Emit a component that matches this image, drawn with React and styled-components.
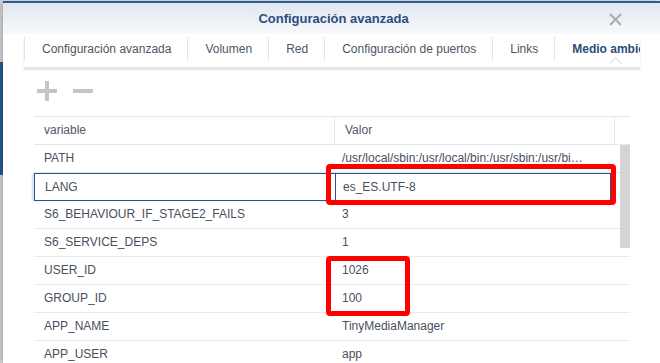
import React from "react";
import styled, { createGlobalStyle } from "styled-components";

const GlobalStyle = createGlobalStyle`
  html, body {
    margin: 0;
    padding: 0;
    background: #e9e9ec;
    font-family: "Liberation Sans", Arial, sans-serif;
    overflow: hidden;
  }
`;

const tabs = [
  { label: "Configuración avanzada" },
  { label: "Volumen" },
  { label: "Red" },
  { label: "Configuración de puertos" },
  { label: "Links" },
  { label: "Medio ambiente", active: true },
];

const rows = [
  { name: "PATH", value: "/usr/local/sbin:/usr/local/bin:/usr/sbin:/usr/bin:/sbin:/bin" },
  { name: "LANG", value: "es_ES.UTF-8", editing: true },
  { name: "S6_BEHAVIOUR_IF_STAGE2_FAILS", value: "3" },
  { name: "S6_SERVICE_DEPS", value: "1" },
  { name: "USER_ID", value: "1026" },
  { name: "GROUP_ID", value: "100" },
  { name: "APP_NAME", value: "TinyMediaManager" },
  { name: "APP_USER", value: "app" },
];

const App = () => {
  return (
    <Page>
      <GlobalStyle />
      <Backdrop>
        <BackBlue />
      </Backdrop>
      <Dialog>
        <Header>
          <Title>Configuración avanzada</Title>
          <Close>
            <svg width="13" height="13" viewBox="0 0 13 13">
              <path d="M1 1L12 12M12 1L1 12" stroke="#a9adb3" strokeWidth="2" />
            </svg>
          </Close>
        </Header>
        <Body>
          <TabBar>
            {tabs.map((t) => (
              <Tab key={t.label} active={t.active}>
                {t.label}
              </Tab>
            ))}
          </TabBar>
          <Toolbar>
            <ToolButton>
              <svg width="20" height="20" viewBox="0 0 20 20">
                <path d="M10 0V20M0 10H20" stroke="#c3c5c9" strokeWidth="4" />
              </svg>
            </ToolButton>
            <ToolButton>
              <svg width="20" height="20" viewBox="0 0 20 20">
                <path d="M0 10H20" stroke="#c3c5c9" strokeWidth="4" />
              </svg>
            </ToolButton>
          </Toolbar>
          <Table>
            <HeadRow>
              <HeadCell w={300}>variable</HeadCell>
              <HeadCell w={280}>Valor</HeadCell>
              <HeadCell w={16} />
            </HeadRow>
            <BodyArea>
              {rows.map((r) => (
                <Row key={r.name} editing={r.editing}>
                  <NameCell>{r.name}</NameCell>
                  <ValueCell editing={r.editing}>{r.value}</ValueCell>
                </Row>
              ))}
              <ScrollThumb />
            </BodyArea>
          </Table>
        </Body>
        <Mark style={{ left: 323, top: 161, width: 290, height: 41 }} />
        <Mark style={{ left: 323, top: 253, width: 84, height: 60 }} />
      </Dialog>
    </Page>
  );
};

export default App;

const Page = styled.div`
  width: 660px;
  height: 363px;
  display: flex;
  overflow: hidden;
`;

const Backdrop = styled.div`
  width: 3px;
  flex: none;
  padding-top: 62px;
  background: #d9d9dd;
`;

const BackBlue = styled.div`
  height: 113px;
  background: #2a5b97;
`;

const Dialog = styled.div`
  position: relative;
  flex: 1;
  margin-top: 1px;
  background: #fff;
  border-top: 2px solid #2b5c95;
  box-shadow: -2px 0 6px rgba(0, 0, 0, 0.25);
`;

const Header = styled.div`
  position: relative;
  height: 31px;
  display: flex;
  align-items: center;
  justify-content: center;
  background: linear-gradient(#e1e6f0, #f7f9fb);
`;

const Title = styled.div`
  font-size: 13px;
  font-weight: bold;
  color: #2c4d7d;
  margin-left: 4px;
`;

const Close = styled.div`
  position: absolute;
  right: 38px;
  top: 9px;
`;

const Body = styled.div`
  padding-left: 21px;
`;

const TabBar = styled.div`
  width: 616px;
  height: 30px;
  margin-top: 3px;
  display: flex;
  overflow: hidden;
  white-space: nowrap;
  box-shadow: 0 2px 2px rgba(0, 0, 0, 0.12);
  border-bottom: 1px solid #e3e4e7;
`;

const Tab = styled.div`
  position: relative;
  flex: none;
  height: 24px;
  padding: 0 16px 0 17px;
  border-left: 1px solid #e2e4e8;
  font-size: 12px;
  line-height: 24px;
  color: ${({ active }) => (active ? "#2c4d7d" : "#4e5663")};
  font-weight: ${({ active }) => (active ? "bold" : "normal")};

  &::after {
    content: "";
    display: ${({ active }) => (active ? "block" : "none")};
    position: absolute;
    left: 56px;
    bottom: -7px;
    width: 8px;
    height: 8px;
    background: #fff;
    border-left: 1px solid #dcdde0;
    border-top: 1px solid #dcdde0;
    transform: rotate(45deg);
  }
`;

const Toolbar = styled.div`
  height: 48px;
  display: flex;
  align-items: center;
  gap: 16px;
  padding-left: 13px;
`;

const ToolButton = styled.div`
  display: flex;
  width: 20px;
  height: 20px;
  margin-top: -2px;
`;

const Table = styled.div`
  width: 596px;
  margin-left: 10px;
  border-top: 1px solid #e3e4e8;
`;

const HeadRow = styled.div`
  display: flex;
  height: 27px;
  border-bottom: 1px solid #e6e7ea;
`;

const HeadCell = styled.div`
  width: ${({ w }) => w}px;
  flex: none;
  box-sizing: border-box;
  padding-left: 10px;
  font-size: 12px;
  line-height: 27px;
  color: #4f5866;
  & + & {
    border-left: 1px solid #e6e7ea;
  }
`;

const BodyArea = styled.div`
  position: relative;
`;

const Row = styled.div`
  display: flex;
  height: 28px;
  box-sizing: border-box;
  border-bottom: 1px solid #e8e9ed;
  width: ${({ editing }) => (editing ? "577px" : "596px")};
  ${({ editing }) =>
    editing &&
    `
    border: 1px solid #2d5386;
    box-shadow: -2px 0 2px #cfe0f3;
  `}
`;

const NameCell = styled.div`
  width: 300px;
  flex: none;
  box-sizing: border-box;
  padding-left: 10px;
  font-size: 12px;
  line-height: 27px;
  color: #47505d;
`;

const ValueCell = styled.div`
  flex: 1;
  min-width: 0;
  padding-left: ${({ editing }) => (editing ? "7px" : "8px")};
  padding-right: 44px;
  font-size: 12px;
  line-height: ${({ editing }) => (editing ? "26px" : "27px")};
  color: #47505d;
  white-space: nowrap;
  overflow: hidden;
  text-overflow: ellipsis;
  ${({ editing }) => editing && `border-left: 1px solid #2d5386;`}
`;

const ScrollThumb = styled.div`
  position: absolute;
  right: 0;
  top: 0;
  width: 10px;
  height: 103px;
  background: #d3d4d7;
`;

const Mark = styled.div`
  position: absolute;
  box-sizing: border-box;
  border: 5px solid #ff0000;
  border-radius: 4px;
`;
